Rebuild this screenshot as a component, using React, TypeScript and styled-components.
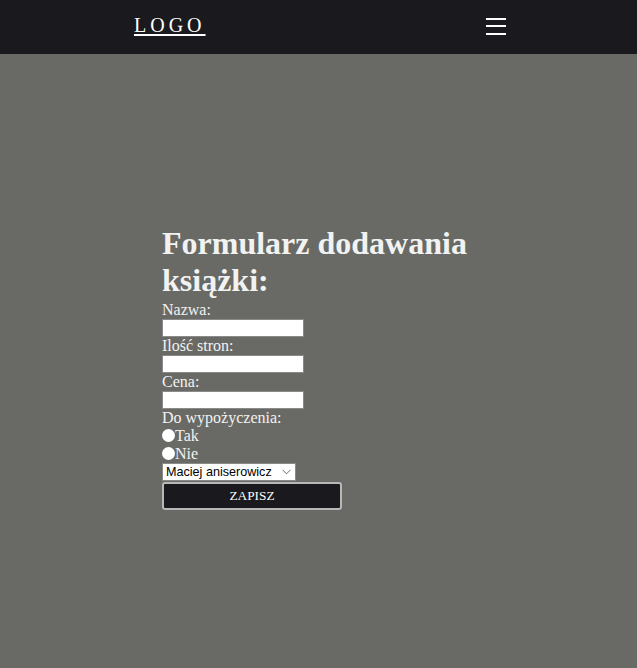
import React from 'react'
import styled, { createGlobalStyle } from 'styled-components'

const GlobalStyle = createGlobalStyle`
  html, body {
    margin: 0;
    padding: 0;
    height: 100%;
  }
  body {
    background: #696a65;
    font-family: "Liberation Serif", "Times New Roman", serif;
    color: #f2f2f2;
  }
`

const Page = styled.div`
  min-height: 668px;
  display: flex;
  flex-direction: column;
`

const Header = styled.header`
  height: 54px;
  background: #1a191e;
  display: flex;
  align-items: center;
`

const Nav = styled.nav`
  width: 372px;
  margin: 0 auto;
  padding-left: 3px;
  display: flex;
  justify-content: space-between;
  align-items: center;
`

const Logo = styled.a`
  color: #ffffff;
  font-size: 20px;
  letter-spacing: 4px;
  text-decoration: underline;
  text-underline-offset: 2px;
  margin-top: -4px;
`

const Burger = styled.button`
  width: 20px;
  height: 17px;
  padding: 0;
  border: none;
  background: transparent;
  display: flex;
  flex-direction: column;
  justify-content: space-between;
  margin-top: -2px;

  span {
    display: block;
    height: 2px;
    background: #ffffff;
  }
`

const Main = styled.main`
  flex: 1;
  padding-top: 171px;
`

const Form = styled.form`
  width: 313px;
  margin: 0 auto;
  font-size: 16px;
`

const Title = styled.h1`
  font-size: 32px;
  margin: 0 0 2px;
  font-weight: bold;
`

const Label = styled.label`
  display: block;
`

const TextInput = styled.input`
  display: block;
  box-sizing: border-box;
  width: 142px;
  height: 18px;
  margin: 0;
  padding: 0 2px;
  border: 1px solid #8a8a8a;
  background: #ffffff;
`

const RadioRow = styled.label`
  display: block;
`

const Radio = styled.input`
  appearance: none;
  width: 13px;
  height: 13px;
  margin: 0;
  border-radius: 50%;
  background: #ffffff;
  vertical-align: -1px;
`

const SelectWrap = styled.div`
  position: relative;
  width: 134px;
  height: 18px;
`

const Select = styled.select`
  appearance: none;
  display: block;
  box-sizing: border-box;
  width: 134px;
  height: 18px;
  margin: 0;
  padding: 0 0 0 3px;
  font-family: "Liberation Sans", Arial, sans-serif;
  font-size: 12.6px;
  color: #000000;
  background: #ffffff;
  border: 1px solid #8a8a8a;
  border-radius: 0;
`

const Chevron = styled.svg`
  position: absolute;
  right: 5px;
  top: 6px;
  pointer-events: none;
`

const Submit = styled.button`
  display: block;
  width: 180px;
  height: 28px;
  margin-top: 1px;
  background: #1a191e;
  color: #ffffff;
  border: 2px solid #b8b8b8;
  border-radius: 3px;
  font-family: "Liberation Serif", "Times New Roman", serif;
  font-size: 13.33px;
  text-transform: uppercase;
`

export default function App() {
  return (
    <Page>
      <GlobalStyle />
      <Header>
        <Nav>
          <Logo href="#">LOGO</Logo>
          <Burger type="button" aria-label="menu">
            <span />
            <span />
            <span />
          </Burger>
        </Nav>
      </Header>
      <Main>
        <Form onSubmit={e => e.preventDefault()}>
          <Title>Formularz dodawania książki:</Title>
          <Label htmlFor="nazwa">Nazwa:</Label>
          <TextInput id="nazwa" type="text" />
          <Label htmlFor="strony">Ilość stron:</Label>
          <TextInput id="strony" type="text" />
          <Label htmlFor="cena">Cena:</Label>
          <TextInput id="cena" type="text" />
          <Label>Do wypożyczenia:</Label>
          <RadioRow>
            <Radio type="radio" name="wyp" value="tak" />Tak
          </RadioRow>
          <RadioRow>
            <Radio type="radio" name="wyp" value="nie" />Nie
          </RadioRow>
          <SelectWrap>
            <Select defaultValue="1">
              <option value="1">Maciej aniserowicz</option>
            </Select>
            <Chevron width="9" height="6" viewBox="0 0 9 6">
              <path d="M0.5 0.8 L4.5 4.8 L8.5 0.8" fill="none" stroke="#6d6d6d" strokeWidth="1" />
            </Chevron>
          </SelectWrap>
          <Submit type="submit">Zapisz</Submit>
        </Form>
      </Main>
    </Page>
  )
}
